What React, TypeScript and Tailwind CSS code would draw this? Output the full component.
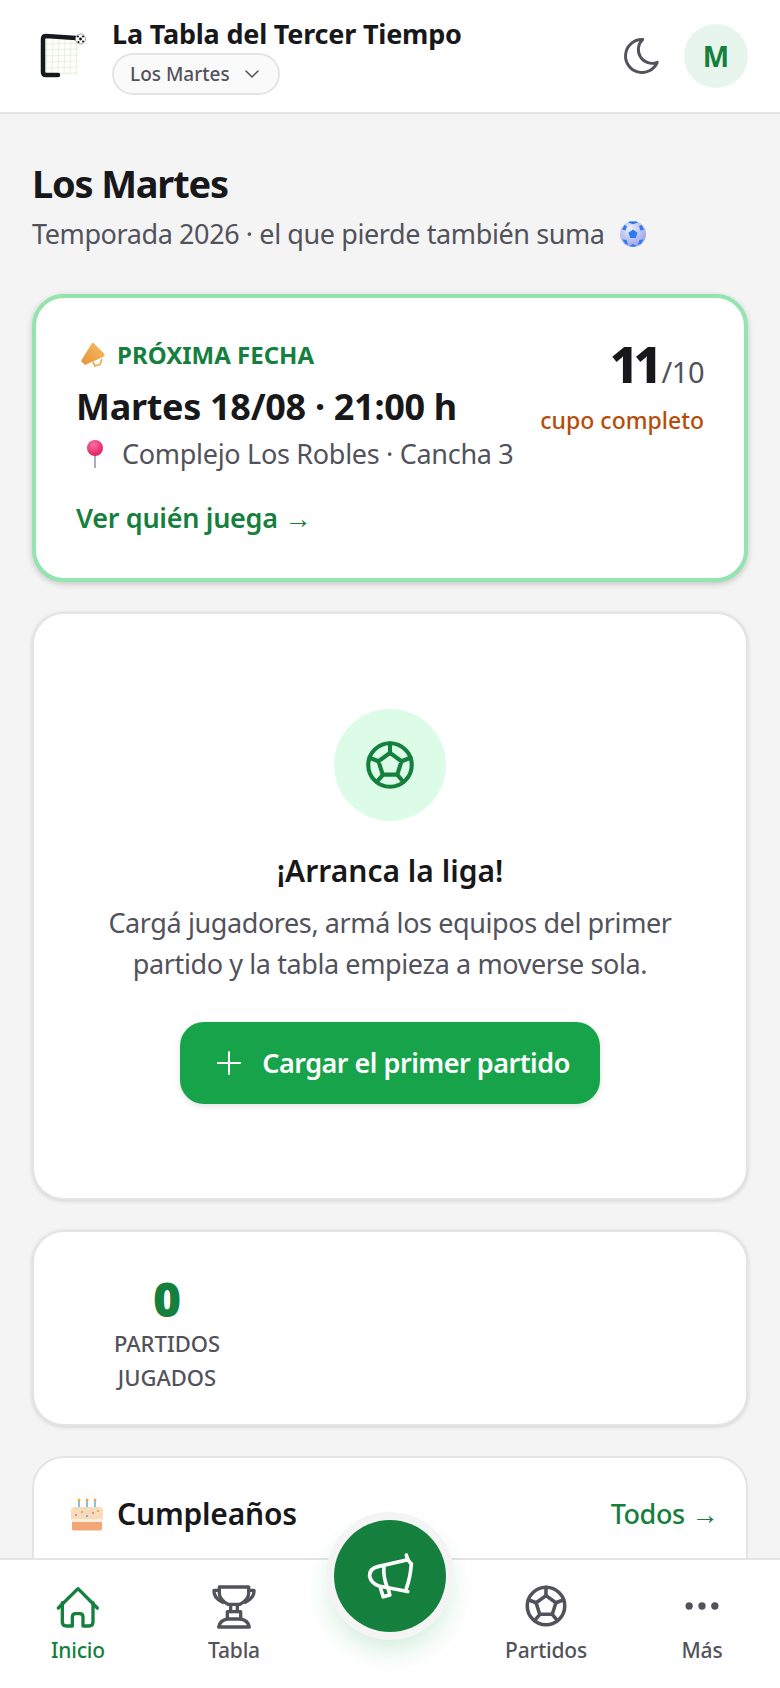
import type { ReactNode } from "react";
import { TbBallFootball, TbMoon, TbChevronDown, TbDots, TbPlus } from "react-icons/tb";

const FONT = "font-['Noto_Sans','Open_Sans',sans-serif]";

function GoalLogo() {
  return (
    <svg viewBox="0 0 64 64" className="h-[64px] w-[64px]">
      {[15, 21, 27, 33, 39, 45].map((x) => (
        <line key={x} x1={x} y1="15" x2={x - 1} y2="51" stroke="#e6f1d6" strokeWidth="1" />
      ))}
      {[20, 26, 32, 38, 44, 50].map((y) => (
        <line key={y} x1="13" y1={y} x2="46" y2={y - 1} stroke="#e6f1d6" strokeWidth="1" />
      ))}
      <path d="M44 14 L14 12 Q11 12 11 15 V48 Q11 51 14 51 H26" fill="none" stroke="#16181b" strokeWidth="4.5" strokeLinecap="round" />
      <circle cx="48.500" cy="15" r="5" fill="#fff" stroke="#888" strokeWidth="0.8" />
      <circle cx="48.500" cy="15" r="1.400" fill="#111" />
      <circle cx="46" cy="12.600" r="1" fill="#111" />
      <circle cx="51" cy="12.600" r="1" fill="#111" />
      <circle cx="46.500" cy="18" r="1" fill="#111" />
      <circle cx="51" cy="17.600" r="1" fill="#111" />
    </svg>
  );
}

function BallEmoji() {
  return (
    <svg viewBox="0 0 28 28" className="h-[28px] w-[28px]">
      <defs>
        <radialGradient id="ballG" cx="0.4" cy="0.3" r="0.8">
          <stop offset="0" stopColor="#eef0f8" />
          <stop offset="1" stopColor="#8f96e8" />
        </radialGradient>
      </defs>
      <circle cx="14" cy="14" r="13" fill="url(#ballG)" />
      <path d="M14 9.500l4.500 3.200-1.700 5.200h-5.600l-1.700-5.200z" fill="#2a7bf0" />
      <path d="M9 2.500l5 1.800 5-1.800-1.500-1h-7zM3 9.500l3.500 1 1.500-4.500-2.500-1zM25 9.500l-3.500 1-1.500-4.500 2.500-1zM3.500 19.500l4 .5 1.500 4.500-2.500-.5zM24.500 19.500l-4 .5-1.500 4.500 2.500-.5zM10.500 26l3.500-2 3.500 2-3.500.8z" fill="#2a7bf0" />
    </svg>
  );
}

function MegaphoneEmoji() {
  return (
    <svg viewBox="0 0 26 26" className="h-[26px] w-[26px]">
      <defs>
        <linearGradient id="megG" x1="0" y1="1" x2="1" y2="0">
          <stop offset="0" stopColor="#e8913c" />
          <stop offset="1" stopColor="#f6bd62" />
        </linearGradient>
      </defs>
      <path d="M12 1 Q13 0.500 14 1.500 L24.500 12 Q25 14 23 15 L5 23 L1 19 Z" fill="url(#megG)" />
      <path d="M13 20 L15 24 L20 22.500 L22 17" fill="none" stroke="#eeaa55" strokeWidth="1.800" strokeLinejoin="round" />
    </svg>
  );
}

function PinEmoji() {
  return (
    <svg viewBox="0 0 20 30" className="h-[30px] w-[20px]">
      <defs>
        <radialGradient id="pinG" cx="0.4" cy="0.3" r="0.7">
          <stop offset="0" stopColor="#ff6f9c" />
          <stop offset="1" stopColor="#e0205f" />
        </radialGradient>
      </defs>
      <rect x="9" y="12" width="2" height="17" fill="#b3a9bc" />
      <circle cx="10" cy="9" r="8" fill="url(#pinG)" />
    </svg>
  );
}

function CakeEmoji() {
  return (
    <svg viewBox="0 0 34 34" className="h-[34px] w-[34px]">
      <path d="M9 4v8M17 4v8M25 4v8" stroke="#7cc4ee" strokeWidth="2" />
      <circle cx="9" cy="3" r="1.500" fill="#f4a73c" />
      <circle cx="17" cy="3" r="1.500" fill="#f4a73c" />
      <circle cx="25" cy="3" r="1.500" fill="#f4a73c" />
      <rect x="1" y="10" width="32" height="14" rx="3.500" fill="#f6dcb8" />
      <rect x="2" y="22" width="30" height="3" fill="#fbeedd" />
      <path d="M2 25 H32 V32 Q32 33.500 30 33.500 H4 Q2 33.500 2 32 Z" fill="#f3a676" />
      <circle cx="6" cy="18" r="0.900" fill="#e45d7c" />
      <circle cx="12" cy="15" r="0.900" fill="#e0972f" />
      <circle cx="17" cy="19" r="0.900" fill="#4f96e0" />
      <circle cx="23" cy="16" r="0.900" fill="#e45d7c" />
      <circle cx="28" cy="14" r="0.900" fill="#e0972f" />
    </svg>
  );
}

function HomeIcon() {
  return (
    <svg viewBox="40 30 150 144" className="h-[48px] w-[50px]" fill="none" stroke="currentColor" strokeWidth="10" strokeLinecap="round" strokeLinejoin="round">
      <path d="M56 108 L115 50 L173 108" />
      <path d="M68 92 V150 Q68 162 80 162 H98 V135 Q98 125 108 125 H120 Q130 125 130 135 V162 H148 Q160 162 160 150 V92" />
    </svg>
  );
}

function TrophyIcon() {
  return (
    <svg viewBox="507 35 150 144" className="h-[48px] w-[50px]" fill="none" stroke="currentColor" strokeWidth="10" strokeLinecap="round" strokeLinejoin="round">
      <path d="M538 50 H626 V68 Q626 88 600 102 H564 Q538 88 538 68 Z" />
      <path d="M538 60 H522 Q520 82 548 96" />
      <path d="M626 60 H642 Q644 82 616 96" />
      <path d="M572 104 V124 M592 104 V124" />
      <path d="M562 124 H602 V146 H562 Z" />
      <path d="M562 146 Q540 150 536 170 H628 Q624 150 602 146" />
    </svg>
  );
}

function ShoutIcon() {
  return (
    <svg viewBox="130 120 160 150" className="h-[50px] w-[53px]" fill="none" stroke="#fff" strokeWidth="11" strokeLinecap="round" strokeLinejoin="round">
      <path d="M258 132 Q262 150 273 158 Q270 200 258 232" />
      <path d="M262 146 L175 166 Q146 172 147 195 Q150 216 175 225 L262 242" />
      <path d="M190 166 Q188 200 200 228" />
      <path d="M180 232 L188 258 L208 252 L202 230" />
    </svg>
  );
}

function NavItem({ icon, label, active }: { icon: ReactNode; label: string; active?: boolean }) {
  return (
    <div className={`flex flex-1 flex-col items-center gap-[6px] ${active ? "text-[#15803d]" : "text-[#52525b]"}`}>
      <div className="flex h-[48px] items-center justify-center">{icon}</div>
      <span className="text-[21px] leading-[28px] font-medium tracking-[-0.2px]">{label}</span>
    </div>
  );
}

export default function App() {
  return (
    <div className={`relative h-[1688px] w-[780px] overflow-hidden bg-[#f4f4f5] text-[#18181b] ${FONT}`}>
      <header className="flex h-[114px] items-center justify-between border-b-2 border-[#e4e4e7] bg-white px-[32px]">
        <div className="flex items-center gap-[16px]">
          <GoalLogo />
          <div className="flex flex-col gap-[2px]">
            <h1 className="text-[27px] leading-[34px] font-bold tracking-[-0.2px]">La Tabla del Tercer Tiempo</h1>
            <button className="flex h-[42px] w-[168px] items-center gap-[10px] rounded-full border-2 border-[#e4e4e7] bg-[#fafafa] pl-[16px] text-[19px] font-medium text-[#52525b]">
              Los Martes <TbChevronDown className="h-[24px] w-[24px]" strokeWidth={1.5} />
            </button>
          </div>
        </div>
        <div className="flex items-center gap-[20px]">
          <TbMoon className="h-[44px] w-[44px] text-[#52525b]" strokeWidth={1.6} />
          <div className="flex h-[64px] w-[64px] items-center justify-center rounded-full bg-[#e8f5ec] text-[28px] font-bold text-[#15803d]">M</div>
        </div>
      </header>

      <main className="flex flex-col gap-[30px] px-[32px] pt-[45px]">
        <div>
          <h2 className="text-[38px] leading-[48px] font-bold tracking-[-1.2px]">Los Martes</h2>
          <p className="mt-[7px] flex items-center gap-[14px] text-[27px] leading-[40px] tracking-[-0.4px] text-[#52525b]">
            Temporada 2026 · el que pierde también suma <BallEmoji />
          </p>
        </div>

        <section className="mt-[10px] flex h-[288px] justify-between rounded-[32px] border-[4px] border-[#93e4ae] bg-white px-[40px] pt-[41px] shadow-[0_2px_6px_rgba(0,0,0,0.2)]">
          <div>
            <div className="flex items-center gap-[11px] pl-[4px] text-[24px] leading-[32px] font-bold text-[#15803d]">
              <MegaphoneEmoji /> PRÓXIMA FECHA
            </div>
            <div className="mt-[13px] text-[36px] leading-[46px] font-bold tracking-[-0.3px]">Martes 18/08 · 21:00 h</div>
            <div className="mt-[4px] flex items-center gap-[17px] pl-[9px] text-[27px] leading-[40px] tracking-[-0.3px] text-[#52525b]">
              <PinEmoji /> Complejo Los Robles · Cancha 3
            </div>
            <div className="mt-[25px] text-[27px] leading-[38px] font-semibold tracking-[-0.3px] text-[#15803d]">Ver quién juega →</div>
          </div>
          <div className="flex flex-col items-end">
            <div className="-mt-[3px] flex h-[56px] items-baseline">
              <span className="text-[50px] leading-[56px] font-extrabold tracking-[-5px]">11</span>
              <span className="ml-[4px] text-[29px] tracking-[-0.5px] text-[#52525b]">/10</span>
            </div>
            <div className="mt-[12px] text-[23px] leading-[32px] font-medium text-[#b84c08]">cupo completo</div>
          </div>
        </section>

        <section className="flex h-[588px] flex-col items-center rounded-[32px] border-2 border-[#e4e4e7] bg-white pt-[95px] shadow-[0_1px_4px_rgba(0,0,0,0.15)]">
          <div className="flex h-[112px] w-[112px] items-center justify-center rounded-full bg-[#dcfce7]">
            <TbBallFootball className="h-[58px] w-[58px] text-[#15803d]" strokeWidth={1.7} />
          </div>
          <h3 className="mt-[28px] text-[30px] leading-[44px] font-semibold">¡Arranca la liga!</h3>
          <p className="mt-[9px] text-center text-[27px] leading-[41px] tracking-[-0.4px] text-[#52525b]">
            Cargá jugadores, armá los equipos del primer
            <br />
            partido y la tabla empieza a moverse sola.
          </p>
          <button className="mt-[38px] flex h-[82px] w-[420px] items-center justify-center gap-[14px] rounded-[24px] bg-[#16a34a] text-[27px] font-semibold tracking-[-0.5px] text-white shadow-[0_2px_6px_rgba(0,0,0,0.12)]">
            <TbPlus className="h-[38px] w-[38px]" strokeWidth={1.3} /> Cargar el primer partido
          </button>
        </section>

        <section className="h-[196px] rounded-[32px] border-2 border-[#e4e4e7] bg-white pt-[40px] shadow-[0_1px_4px_rgba(0,0,0,0.15)]">
          <div className="flex w-[266px] flex-col items-center">
            <div className="text-[48px] leading-[54px] font-black text-[#15803d]">0</div>
            <div className="text-center text-[22px] leading-[34px] font-medium text-[#52525b]">
              PARTIDOS
              <br />
              JUGADOS
            </div>
          </div>
        </section>

        <section className="flex h-[200px] items-start justify-between rounded-t-[32px] border-2 border-[#e4e4e7] bg-white pt-[34px] pr-[28px] pl-[36px]">
          <div className="flex items-center gap-[13px] text-[30px] leading-[44px] font-semibold tracking-[-0.2px]">
            <CakeEmoji /> Cumpleaños
          </div>
          <div className="text-[27px] leading-[44px] font-medium tracking-[-0.4px] text-[#15803d]">Todos →</div>
        </section>
      </main>

      <nav className="absolute right-0 bottom-0 left-0 flex h-[130px] items-start border-t-2 border-[#e4e4e7] bg-white pt-[22px]">
        <NavItem active label="Inicio" icon={<HomeIcon />} />
        <NavItem label="Tabla" icon={<TrophyIcon />} />
        <div className="flex-1" />
        <NavItem label="Partidos" icon={<TbBallFootball className="h-[50px] w-[50px]" strokeWidth={1.7} />} />
        <NavItem label="Más" icon={<TbDots className="h-[44px] w-[44px]" strokeWidth={2} />} />
      </nav>
      <button className="absolute bottom-[56px] left-[334px] flex h-[112px] w-[112px] items-center justify-center rounded-full bg-[#15803d] shadow-[0_0_0_8px_#f4f4f5,0_14px_30px_rgba(22,163,74,0.25)]">
        <ShoutIcon />
      </button>
    </div>
  );
}
